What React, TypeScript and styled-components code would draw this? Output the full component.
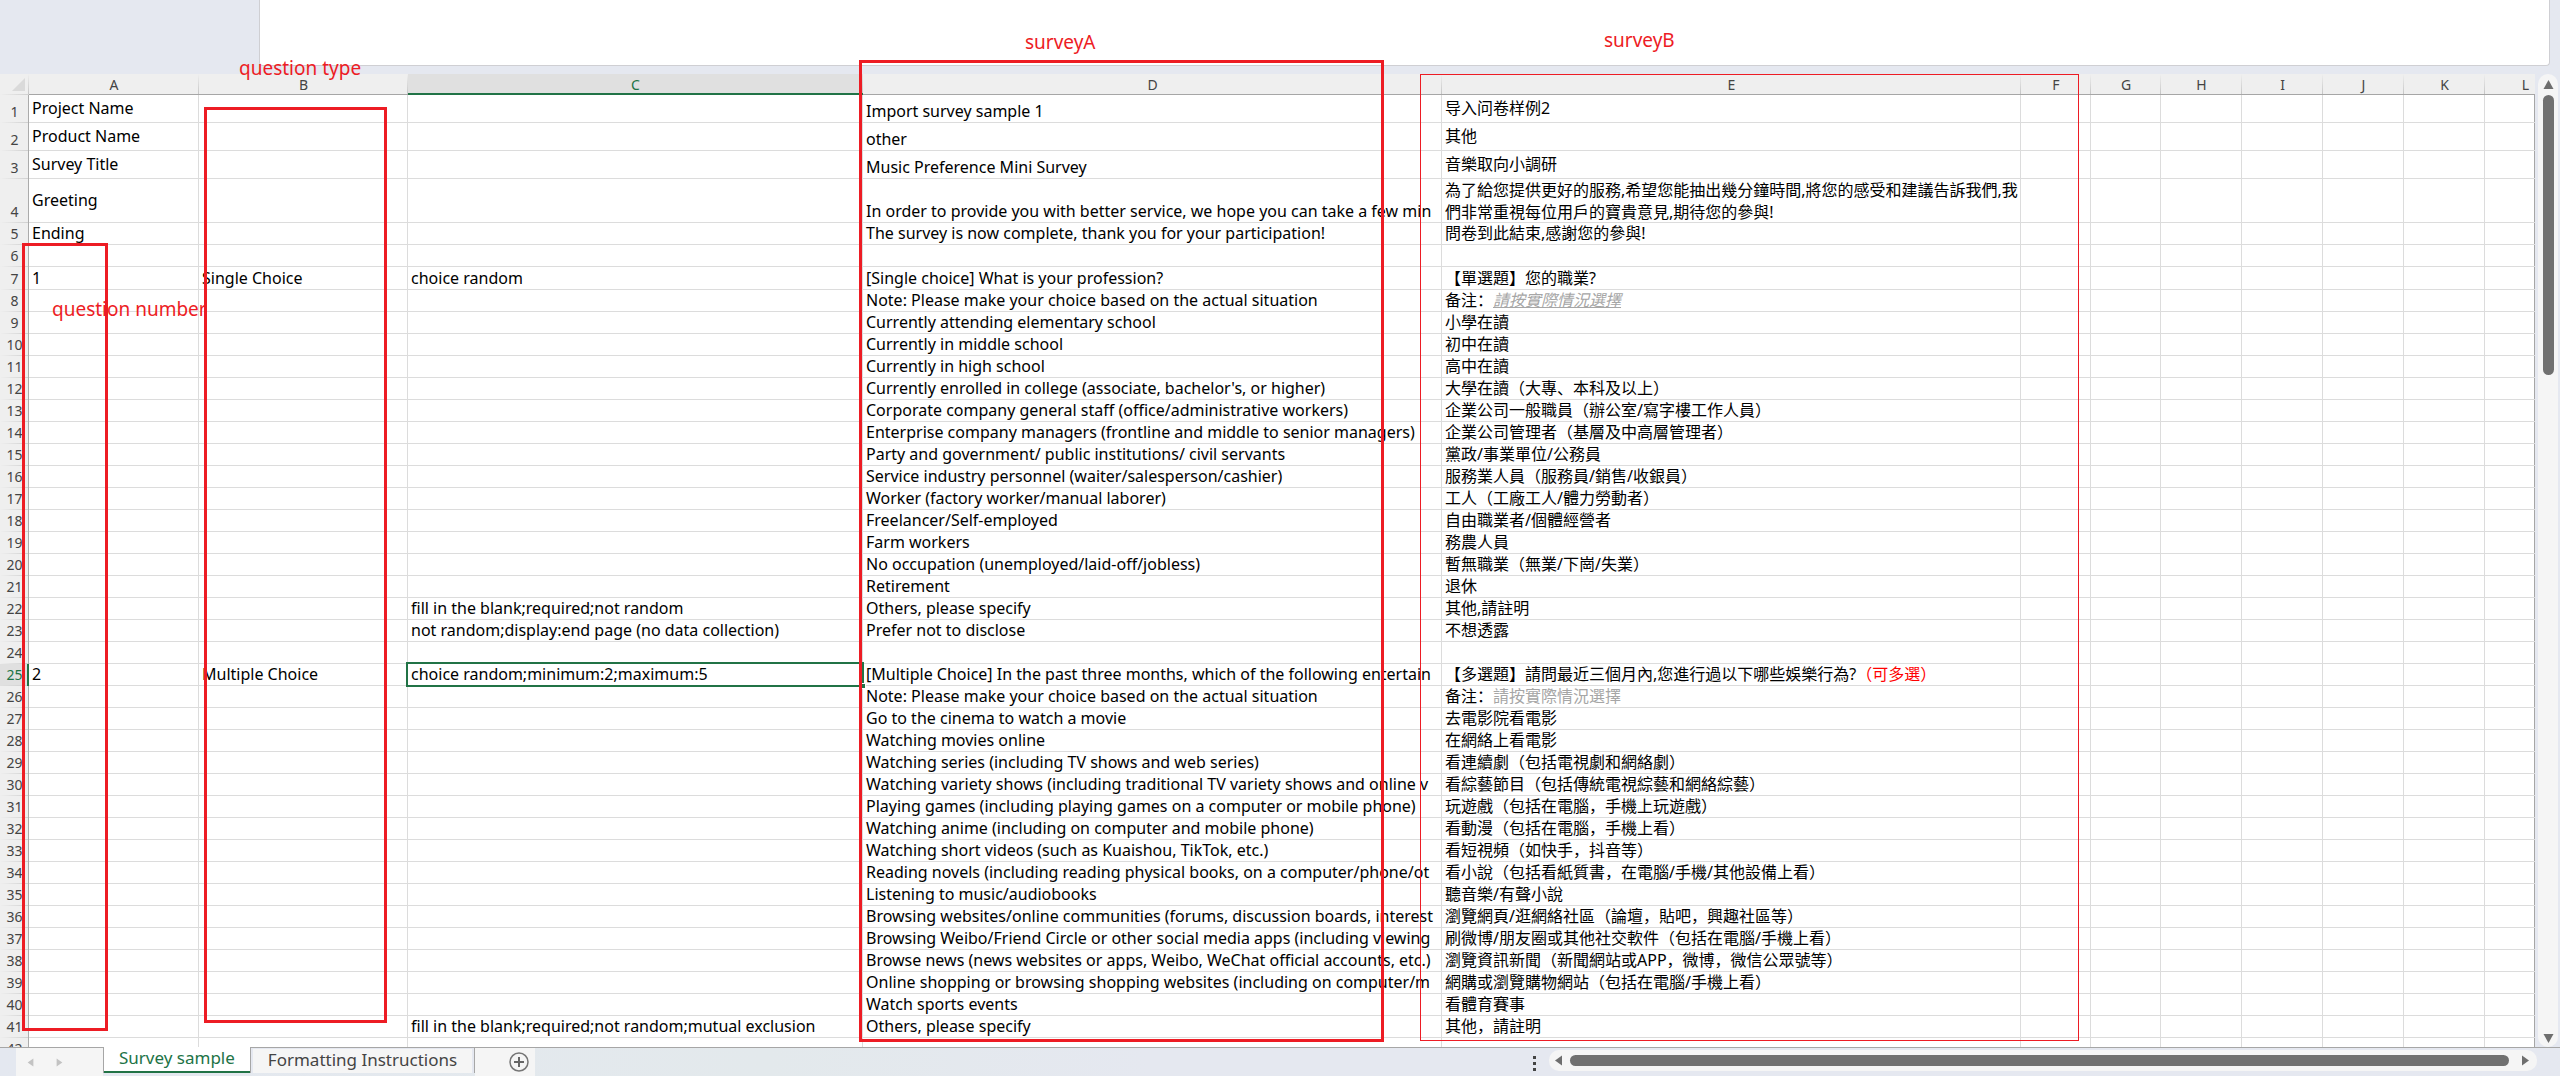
import React from "react";
import styled, { createGlobalStyle, css } from "styled-components";

const LINE = "#dcdcdc";
const EDGE = "#a6a6a6";
const GREEN = "#217346";
const RED = "#ed1c24";
const CHROME = "#e5e8f0";

const GlobalStyle = createGlobalStyle`
  *, *::before, *::after { box-sizing: border-box; }
  body {
    margin: 0;
    background: ${CHROME};
    font-family: "Noto Sans", "Noto Sans CJK SC", sans-serif;
    font-size: 16px;
    color: #000;
  }
  button, textarea { font: inherit; color: inherit; border: 0; padding: 0; margin: 0; background: none; }
`;

const Workbook = styled.div`
  position: relative;
  display: flex;
  flex-direction: column;
  height: 100vh;
  overflow: hidden;
`;

const FormulaRow = styled.div`
  display: flex;
  flex: none;
  height: 74px;
  padding: 0 10px 8px 259px;
`;

const FormulaInput = styled.textarea`
  flex: 1;
  resize: none;
  outline: none;
  background: #fff;
  border: 1px solid #cfcfd3;
  border-top: 0;
  border-radius: 0 0 4px 4px;
`;

const SheetArea = styled.div`
  display: flex;
  flex: 1;
  min-height: 0;
  gap: 3px;
  padding-right: 2px;
`;

const GridPane = styled.div`
  flex: 1;
  min-width: 0;
  overflow: hidden;
  background: #fff;
  box-shadow: inset -1px 0 ${EDGE};
`;

const Grid = styled.table`
  width: 100%;
  table-layout: fixed;
  border-collapse: separate;
  border-spacing: 0;
`;

const Column = styled.col<{ $width: number }>`
  width: ${(p) => p.$width}px;
`;

const ColumnHead = styled.th<{ $selected?: boolean }>`
  height: 21px;
  padding: 0;
  font-size: 14px;
  line-height: 19px;
  font-weight: 400;
  color: ${(p) => (p.$selected ? GREEN : "#444")};
  background: linear-gradient(to bottom, transparent, #c4c4c4) right / 1px 100% no-repeat,
    ${(p) => (p.$selected ? "#e0e0e0" : "#efefef")};
  box-shadow: ${(p) => (p.$selected ? `inset 0 -2px ${GREEN}` : `inset 0 -1px ${EDGE}`)};
`;

const Corner = styled.td`
  padding: 0 4px 4px 0;
  background: linear-gradient(to right, transparent, #cfcfcf) bottom / 100% 1px no-repeat,
    linear-gradient(to bottom, transparent, #c4c4c4) right / 1px 100% no-repeat, #efefef;
  vertical-align: bottom;
  text-align: right;
  line-height: 0;
`;

const Row = styled.tr<{ $height: number }>`
  height: ${(p) => p.$height}px;
`;

const RowHead = styled.th<{ $selected?: boolean }>`
  padding: 0 0 1px;
  font-size: 14px;
  line-height: 20px;
  font-weight: 400;
  vertical-align: bottom;
  color: ${(p) => (p.$selected ? GREEN : "#444")};
  background: linear-gradient(to right, transparent, #cfcfcf) bottom / 100% 1px no-repeat,
    ${(p) => (p.$selected ? "#e0e0e0" : "#efefef")};
  box-shadow: ${(p) => (p.$selected ? `inset -2px 0 ${GREEN}` : "inset -1px 0 #ababab")};
`;

const Cell = styled.td<{ $align?: "middle" | "bottom"; $wrap?: boolean; $selected?: boolean }>`
  position: relative;
  padding: 0 0 2px 3px;
  line-height: 20px;
  white-space: nowrap;
  overflow: hidden;
  vertical-align: ${(p) => p.$align ?? "bottom"};
  box-shadow: inset -1px -1px ${LINE};
  ${(p) =>
    p.$wrap &&
    css`
      padding-bottom: 0;
      line-height: 22px;
      white-space: normal;
      word-break: break-all;
    `}
  ${(p) =>
    p.$selected &&
    css`
      overflow: visible;
      &::before {
        content: "";
        position: absolute;
        z-index: 1;
        inset: -2px -1px -1px -2px;
        border: 2px solid ${GREEN};
      }
      &::after {
        content: "";
        position: absolute;
        z-index: 1;
        right: -3px;
        bottom: -3px;
        width: 6px;
        height: 6px;
        background: ${GREEN};
        border: 1px solid #fff;
      }
    `}
`;

const Hint = styled.span<{ $linked?: boolean }>`
  color: #a6a6a6;
  ${(p) =>
    p.$linked &&
    css`
      font-style: italic;
      text-decoration: underline;
    `}
`;

const Accent = styled.span`
  color: #ff0000;
`;

const ScrollTrack = styled.div<{ $vertical?: boolean }>`
  display: flex;
  flex-direction: ${(p) => (p.$vertical ? "column" : "row")};
  align-items: center;
  background: #f5f5f5;
  border-radius: 10px;
  color: #6e6e6e;
  ${(p) =>
    p.$vertical
      ? css`
          width: 20px;
          padding: 5px 0 3px;
        `
      : css`
          flex: none;
          width: 988px;
          height: 21px;
          padding: 0 6px 0 4px;
        `}
`;

const ScrollButton = styled.button`
  display: flex;
  flex: none;
`;

const ScrollRail = styled.div<{ $vertical?: boolean }>`
  display: flex;
  flex: 1;
  flex-direction: ${(p) => (p.$vertical ? "column" : "row")};
  ${(p) => (p.$vertical ? "padding: 5px 0" : "padding: 0 11px 0 6px")};
`;

const ScrollThumb = styled.div<{ $vertical?: boolean }>`
  background: #707070;
  border-radius: 6px;
  ${(p) => (p.$vertical ? "width: 11px; height: 30%" : "flex: 1; height: 11px")};
`;

const BottomBar = styled.div`
  display: flex;
  flex: none;
  height: 29px;
  padding: 0 23px 0 16px;
  background: linear-gradient(to right, #e4e8f0, #e3e9ec 30%, #e5e8f0 45%);
  box-shadow: inset 0 1px ${EDGE};
`;

const TabNav = styled.div`
  display: flex;
  align-items: center;
  gap: 20px;
  width: 87px;
  margin-top: 1px;
  padding-left: 10px;
  background: #f5f5f5;
  color: #c3c3c3;
`;

const TabNavButton = styled.button`
  display: flex;
`;

const SheetTab = styled.button<{ $active?: boolean }>`
  height: 26px;
  padding: 0 15px 4px;
  font-size: 17px;
  line-height: 22px;
  white-space: nowrap;
  ${(p) =>
    p.$active
      ? css`
          color: ${GREEN};
          background: #fff;
          border: solid ${EDGE};
          border-width: 0 1px;
          box-shadow: inset 0 -2px ${GREEN};
        `
      : css`
          height: 25px;
          margin-top: 1px;
          color: #444;
          background: #f5f5f5;
          border: solid ${CHROME};
          border-width: 1px 2px 0;
          box-shadow: 1px 0 ${EDGE};
        `}
`;

const AddSheet = styled.button`
  display: flex;
  align-items: center;
  justify-content: center;
  width: 60px;
  margin: 1px 0 0 1px;
  padding-left: 28px;
  background: #f5f5f5;
`;

const Spacer = styled.div`
  flex: 1;
`;

const Grip = styled.div`
  display: flex;
  flex-direction: column;
  gap: 3px;
  padding: 9px 13px 0 0;
`;

const GripDot = styled.i`
  width: 3px;
  height: 3px;
  background: #444;
`;

const BottomScroll = styled.div`
  padding-top: 3px;
`;

const MarkBox = styled.div<{ $x: number; $y: number; $w: number; $h: number; $thin?: boolean }>`
  position: absolute;
  z-index: 2;
  left: ${(p) => p.$x}px;
  top: ${(p) => p.$y}px;
  width: ${(p) => p.$w}px;
  height: ${(p) => p.$h}px;
  border: ${(p) => (p.$thin ? 1 : 3)}px solid ${RED};
  pointer-events: none;
`;

const MarkLabel = styled.span<{ $x: number; $y: number }>`
  position: absolute;
  z-index: 2;
  left: ${(p) => p.$x}px;
  top: ${(p) => p.$y}px;
  font-size: 19px;
  line-height: 24px;
  color: ${RED};
  white-space: nowrap;
`;

const Triangle = ({ dir, size = 11 }: { dir: "up" | "down" | "left" | "right"; size?: number }) => {
  const points = {
    up: "5.5,1 10.5,10 0.5,10",
    down: "0.5,1 10.5,1 5.5,10",
    left: "2,5.5 9,0.5 9,10.5",
    right: "2,0.5 9,5.5 2,10.5",
  }[dir];
  return (
    <svg width={size} height={size} viewBox="0 0 11 11" aria-hidden="true">
      <polygon points={points} fill="currentColor" />
    </svg>
  );
};

type RowData = {
  a?: string;
  b?: string;
  c?: string;
  d?: string;
  e?: React.ReactNode;
};

const rows: RowData[] = [
  { a: "Project Name", d: "Import survey sample 1", e: "导入问卷样例2" },
  { a: "Product Name", d: "other", e: "其他" },
  { a: "Survey Title", d: "Music Preference Mini Survey", e: "音樂取向小調研" },
  {
    a: "Greeting",
    d: "In order to provide you with better service, we hope you can take a few min",
    e: "為了給您提供更好的服務,希望您能抽出幾分鐘時間,將您的感受和建議告訴我們,我們非常重視每位用戶的寶貴意見,期待您的參與!",
  },
  { a: "Ending", d: "The survey is now complete, thank you for your participation!", e: "問卷到此結束,感謝您的參與!" },
  {},
  { a: "1", b: "Single Choice", c: "choice random", d: "[Single choice] What is your profession?", e: "【單選題】您的職業?" },
  { d: "Note: Please make your choice based on the actual situation", e: <>备注：<Hint $linked>請按實際情況選擇</Hint></> },
  { d: "Currently attending elementary school", e: "小學在讀" },
  { d: "Currently in middle school", e: "初中在讀" },
  { d: "Currently in high school", e: "高中在讀" },
  { d: "Currently enrolled in college (associate, bachelor's, or higher)", e: "大學在讀（大專、本科及以上）" },
  { d: "Corporate company general staff (office/administrative workers)", e: "企業公司一般職員（辦公室/寫字樓工作人員）" },
  { d: "Enterprise company managers (frontline and middle to senior managers)", e: "企業公司管理者（基層及中高層管理者）" },
  { d: "Party and government/ public institutions/ civil servants", e: "黨政/事業單位/公務員" },
  { d: "Service industry personnel (waiter/salesperson/cashier)", e: "服務業人員（服務員/銷售/收銀員）" },
  { d: "Worker (factory worker/manual laborer)", e: "工人（工廠工人/體力勞動者）" },
  { d: "Freelancer/Self-employed", e: "自由職業者/個體經營者" },
  { d: "Farm workers", e: "務農人員" },
  { d: "No occupation (unemployed/laid-off/jobless)", e: "暫無職業（無業/下崗/失業）" },
  { d: "Retirement", e: "退休" },
  { c: "fill in the blank;required;not random", d: "Others, please specify", e: "其他,請註明" },
  { c: "not random;display:end page (no data collection)", d: "Prefer not to disclose", e: "不想透露" },
  {},
  {
    a: "2",
    b: "Multiple Choice",
    c: "choice random;minimum:2;maximum:5",
    d: "[Multiple Choice] In the past three months, which of the following entertain",
    e: <>【多選題】請問最近三個月內,您進行過以下哪些娛樂行為?<Accent>（可多選）</Accent></>,
  },
  { d: "Note: Please make your choice based on the actual situation", e: <>备注：<Hint>請按實際情況選擇</Hint></> },
  { d: "Go to the cinema to watch a movie", e: "去電影院看電影" },
  { d: "Watching movies online", e: "在網絡上看電影" },
  { d: "Watching series (including TV shows and web series)", e: "看連續劇（包括電視劇和網絡劇）" },
  { d: "Watching variety shows (including traditional TV variety shows and online v", e: "看綜藝節目（包括傳統電視綜藝和網絡綜藝）" },
  { d: "Playing games (including playing games on a computer or mobile phone)", e: "玩遊戲（包括在電腦，手機上玩遊戲）" },
  { d: "Watching anime (including on computer and mobile phone)", e: "看動漫（包括在電腦，手機上看）" },
  { d: "Watching short videos (such as Kuaishou, TikTok, etc.)", e: "看短視頻（如快手，抖音等）" },
  { d: "Reading novels (including reading physical books, on a computer/phone/ot", e: "看小說（包括看紙質書，在電腦/手機/其他設備上看）" },
  { d: "Listening to music/audiobooks", e: "聽音樂/有聲小說" },
  { d: "Browsing websites/online communities (forums, discussion boards, interest", e: "瀏覽網頁/逛網絡社區（論壇，貼吧，興趣社區等）" },
  { d: "Browsing Weibo/Friend Circle or other social media apps (including viewing", e: "刷微博/朋友圈或其他社交軟件（包括在電腦/手機上看）" },
  { d: "Browse news (news websites or apps, Weibo, WeChat official accounts, etc.)", e: "瀏覽資訊新聞（新聞網站或APP，微博，微信公眾號等）" },
  { d: "Online shopping or browsing shopping websites (including on computer/m", e: "網購或瀏覽購物網站（包括在電腦/手機上看）" },
  { d: "Watch sports events", e: "看體育賽事" },
  { c: "fill in the blank;required;not random;mutual exclusion", d: "Others, please specify", e: "其他，請註明" },
  {},
];

const columns: { name: string; width: number }[] = [
  { name: "A", width: 170 },
  { name: "B", width: 209 },
  { name: "C", width: 455 },
  { name: "D", width: 579 },
  { name: "E", width: 579 },
  { name: "F", width: 70 },
  { name: "G", width: 70 },
  { name: "H", width: 81 },
  { name: "I", width: 81 },
  { name: "J", width: 81 },
  { name: "K", width: 81 },
  { name: "L", width: 81 },
];

const HEAD_WIDTH = 29;
const gridWidth = columns.reduce((sum, c) => sum + c.width, HEAD_WIDTH);

const tallRows: Record<number, number> = { 1: 28, 2: 28, 3: 28, 4: 44, 7: 23 };
const SELECTED_ROW = 25;

export default function App() {
  return (
    <>
      <GlobalStyle />
      <Workbook lang="zh-CN">
        <FormulaRow>
          <FormulaInput aria-label="Formula bar" />
        </FormulaRow>

        <SheetArea>
          <GridPane>
            <Grid style={{ width: gridWidth }}>
              <colgroup>
                <Column $width={HEAD_WIDTH} />
                {columns.map((c) => (
                  <Column key={c.name} $width={c.width} />
                ))}
              </colgroup>
              <thead>
                <tr>
                  <Corner>
                    <svg width="13" height="13" viewBox="0 0 13 13" aria-hidden="true">
                      <polygon points="13,0 13,13 0,13" fill="#dadada" />
                    </svg>
                  </Corner>
                  {columns.map((c) => (
                    <ColumnHead key={c.name} scope="col" $selected={c.name === "C"}>
                      {c.name}
                    </ColumnHead>
                  ))}
                </tr>
              </thead>
              <tbody>
                {rows.map((row, i) => {
                  const n = i + 1;
                  return (
                    <Row key={n} $height={tallRows[n] ?? 22}>
                      <RowHead scope="row" $selected={n === SELECTED_ROW}>{n}</RowHead>
                      <Cell $align="middle">{row.a}</Cell>
                      <Cell $align="middle">{row.b}</Cell>
                      <Cell $align="middle" $selected={n === SELECTED_ROW}>{row.c}</Cell>
                      <Cell>{row.d}</Cell>
                      <Cell $align="middle" $wrap={n === 4}>{row.e}</Cell>
                      {columns.slice(5).map((c) => (
                        <Cell key={c.name} />
                      ))}
                    </Row>
                  );
                })}
              </tbody>
            </Grid>
          </GridPane>
          <ScrollTrack $vertical>
            <ScrollButton aria-label="Scroll up"><Triangle dir="up" /></ScrollButton>
            <ScrollRail $vertical><ScrollThumb $vertical /></ScrollRail>
            <ScrollButton aria-label="Scroll down"><Triangle dir="down" /></ScrollButton>
          </ScrollTrack>
        </SheetArea>

        <BottomBar>
          <TabNav>
            <TabNavButton aria-label="Previous sheet"><Triangle dir="left" size={9} /></TabNavButton>
            <TabNavButton aria-label="Next sheet"><Triangle dir="right" size={9} /></TabNavButton>
          </TabNav>
          <SheetTab $active>Survey sample</SheetTab>
          <SheetTab>Formatting Instructions</SheetTab>
          <AddSheet aria-label="New sheet">
            <svg width="20" height="20" viewBox="0 0 20 20" fill="none" aria-hidden="true">
              <circle cx="10" cy="10" r="9" stroke="#767676" strokeWidth="1.5" />
              <path d="M10 5v10M5 10h10" stroke="#666" strokeWidth="2" />
            </svg>
          </AddSheet>
          <Spacer />
          <Grip>
            <GripDot />
            <GripDot />
            <GripDot />
          </Grip>
          <BottomScroll>
            <ScrollTrack>
              <ScrollButton aria-label="Scroll left"><Triangle dir="left" /></ScrollButton>
              <ScrollRail><ScrollThumb /></ScrollRail>
              <ScrollButton aria-label="Scroll right"><Triangle dir="right" /></ScrollButton>
            </ScrollTrack>
          </BottomScroll>
        </BottomBar>

        <MarkBox $x={22} $y={243} $w={86} $h={788} />
        <MarkBox $x={204} $y={107} $w={183} $h={916} />
        <MarkBox $x={859} $y={60} $w={525} $h={982} />
        <MarkBox $x={1420} $y={74} $w={659} $h={967} $thin />
        <MarkLabel $x={52} $y={297}>question number</MarkLabel>
        <MarkLabel $x={239} $y={56}>question type</MarkLabel>
        <MarkLabel $x={1025} $y={30}>surveyA</MarkLabel>
        <MarkLabel $x={1604} $y={28}>surveyB</MarkLabel>
      </Workbook>
    </>
  );
}
